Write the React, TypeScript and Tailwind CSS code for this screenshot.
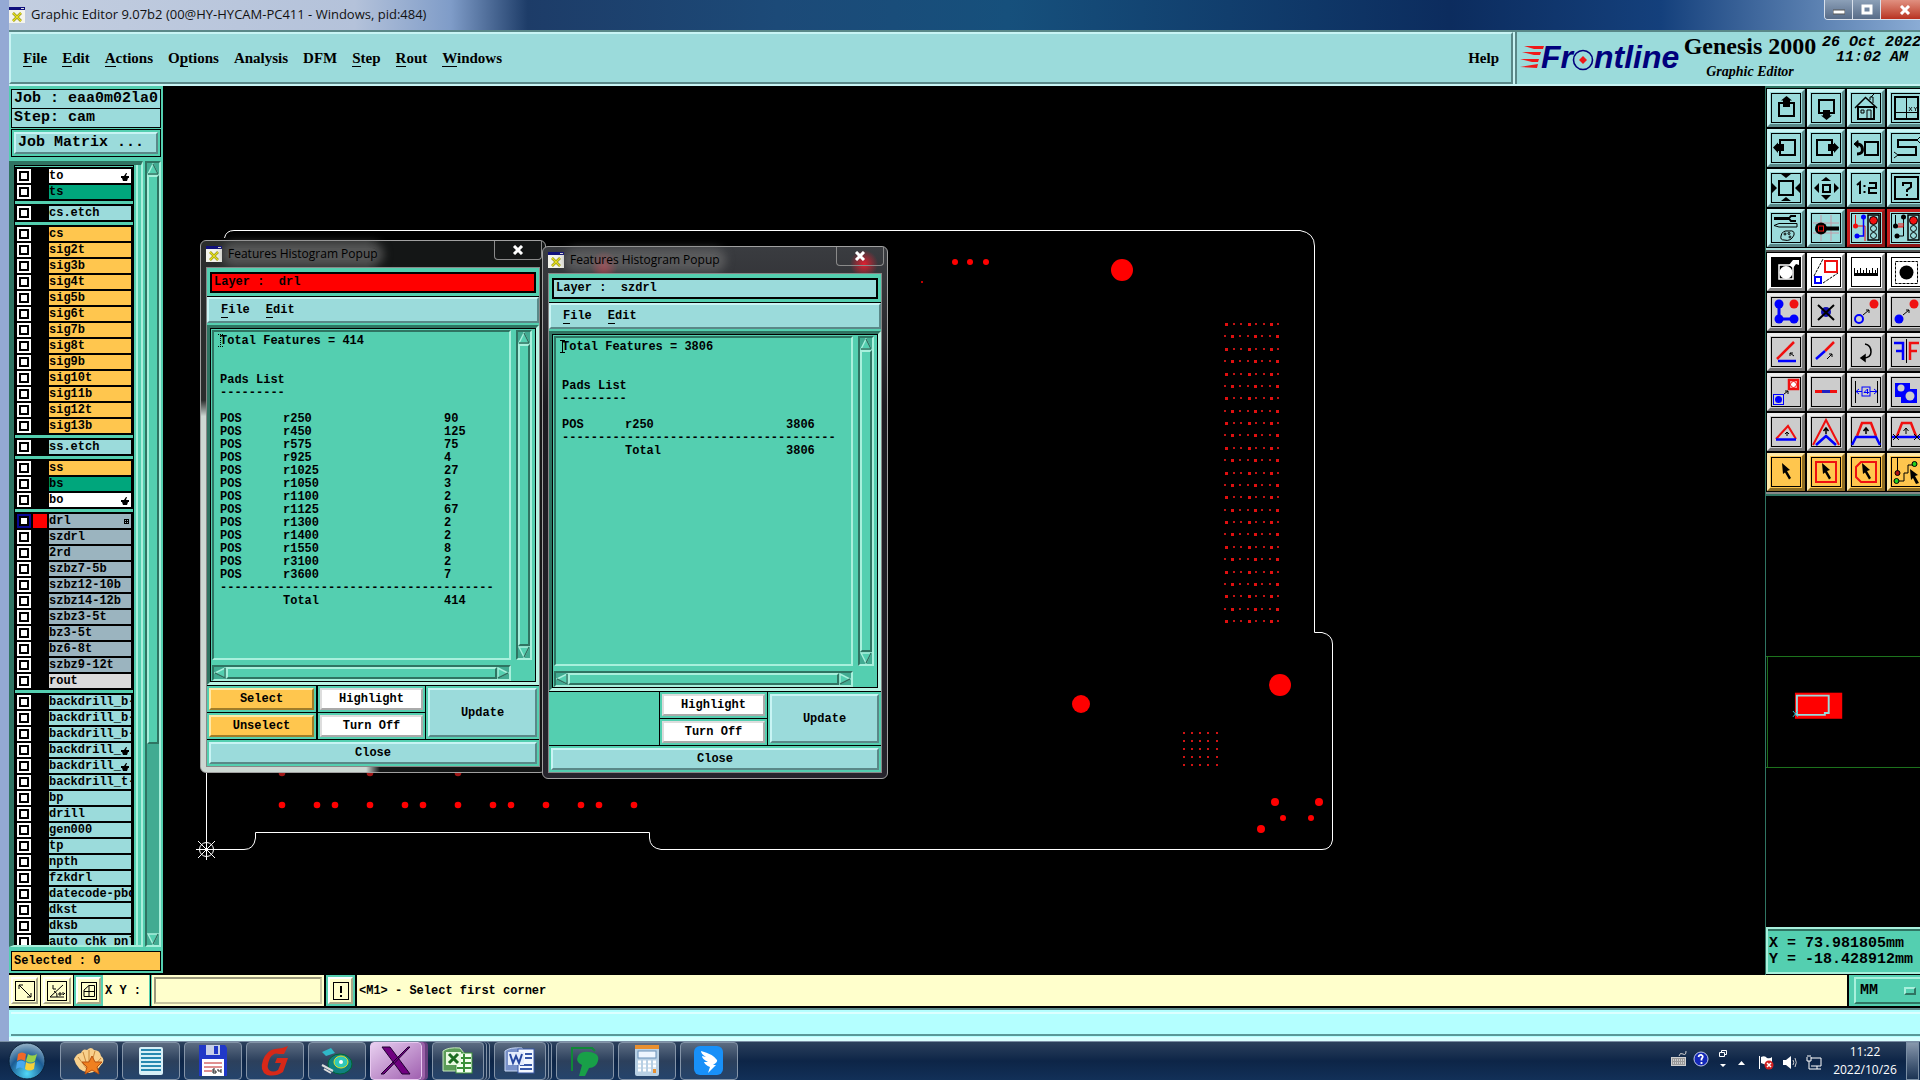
import React from "react";

const bevelCyan =
  "bg-[#9bdbdb] border-t-[#c8f4f4] border-l-[#c8f4f4] border-b-[#5a8888] border-r-[#5a8888]";
const bevelTeal =
  "bg-[#54cfb0] border-t-[#a8f0dc] border-l-[#a8f0dc] border-b-[#2f7462] border-r-[#2f7462]";
const sunkTeal =
  "bg-[#54cfb0] border-t-[#2f7462] border-l-[#2f7462] border-b-[#a8f0dc] border-r-[#a8f0dc]";
const mono = "font-['Liberation_Mono',monospace] font-bold";
const sans = "font-['Open_Sans',sans-serif]";

type Tone = "orange" | "white" | "green" | "cyan" | "slate" | "light";

interface Layer {
  name: string;
  tone: Tone;
  mark?: "hand" | "grid";
  active?: boolean;
}

const toneClass: Record<Tone, string> = {
  orange: "bg-[#ffc64e]",
  white: "bg-white",
  green: "bg-[#00a67c]",
  cyan: "bg-[#9bdbdb]",
  slate: "bg-[#9bb4bf]",
  light: "bg-[#dadada]",
};

const make = (tone: Tone, names: string[]): Layer[] => names.map((name) => ({ name, tone }));

const layerGroups: Layer[][] = [
  [{ name: "to", tone: "white", mark: "hand" }, { name: "ts", tone: "green" }],
  make("cyan", ["cs.etch"]),
  make("orange", [
    "cs", "sig2t", "sig3b", "sig4t", "sig5b", "sig6t", "sig7b",
    "sig8t", "sig9b", "sig10t", "sig11b", "sig12t", "sig13b",
  ]),
  make("cyan", ["ss.etch"]),
  [
    { name: "ss", tone: "orange" },
    { name: "bs", tone: "green" },
    { name: "bo", tone: "white", mark: "hand" },
  ],
  [
    { name: "drl", tone: "slate", mark: "grid", active: true },
    ...make("slate", [
      "szdrl", "2rd", "szbz7-5b", "szbz12-10b", "szbz14-12b", "szbz3-5t", "bz3-5t", "bz6-8t", "szbz9-12t",
    ]),
    { name: "rout", tone: "light" },
  ],
  [
    ...make("cyan", ["backdrill_b-", "backdrill_b-", "backdrill_b-"]),
    { name: "backdrill_", tone: "cyan", mark: "hand" },
    { name: "backdrill_", tone: "cyan", mark: "hand" },
    ...make("cyan", [
      "backdrill_t-", "bp", "drill", "gen000", "tp", "npth", "fzkdrl", "datecode-pbd", "dkst", "dksb", "auto_chk_pnl",
    ]),
  ],
];

const menus: [string, number][] = [
  ["File", 0], ["Edit", 0], ["Actions", 0], ["Options", 1], ["Analysis", -1],
  ["DFM", -1], ["Step", 0], ["Rout", 0], ["Windows", 0],
];

function Mnemonic({ text, at = 0 }: { text: string; at?: number }) {
  if (at < 0) return <>{text}</>;
  return (
    <>
      {text.slice(0, at)}
      <span className="border-b border-black">{text[at]}</span>
      {text.slice(at + 1)}
    </>
  );
}

function AppIcon() {
  return (
    <svg width="16" height="16" viewBox="0 0 16 16" className="shrink-0">
      <rect width="16" height="16" fill="#f4f4ec" />
      <rect width="16" height="3" fill="#10107c" />
      <rect x="12" y="1" width="3" height="1" fill="#ddd" />
      <path d="M4 6l8 8M12 6l-8 8" stroke="#8a8a10" strokeWidth="2.500" />
      <path d="M4 6l8 8M12 6l-8 8" stroke="#e8e020" strokeWidth="1.400" />
    </svg>
  );
}

function Arrow({ dir }: { dir: "up" | "down" | "left" | "right" }) {
  const pts = {
    up: "6,1 11,11 1,11",
    down: "1,1 11,1 6,11",
    left: "1,6 11,1 11,11",
    right: "1,1 11,6 1,11",
  }[dir];
  const shade = {
    up: "M11 11L6 1M1 11H11",
    down: "M11 1L6 11",
    left: "M1 6L11 11V1",
    right: "M1 11L11 6",
  }[dir];
  return (
    <svg width="12" height="12" viewBox="0 0 12 12" className="shrink-0">
      <polygon points={pts} fill="#54cfb0" stroke="#a8f0dc" strokeWidth="1.400" />
      <path d={shade} stroke="#2f7462" strokeWidth="1.400" fill="none" />
    </svg>
  );
}

function VScroll({ thumb }: { thumb: string }) {
  return (
    <div className="flex w-4 shrink-0 flex-col border-2 border-t-[#2f7462] border-l-[#2f7462] border-r-[#a8f0dc] border-b-[#a8f0dc] bg-[#42ab92]">
      <Arrow dir="up" />
      <div className="min-h-0 flex-1">
        <div className={`border-2 ${thumb} ${bevelTeal}`} />
      </div>
      <Arrow dir="down" />
    </div>
  );
}

function HScroll() {
  return (
    <div className="flex h-4 border-2 border-t-[#2f7462] border-l-[#2f7462] border-r-[#a8f0dc] border-b-[#a8f0dc] bg-[#42ab92]">
      <Arrow dir="left" />
      <div className={`flex-1 border-2 ${bevelTeal}`} />
      <Arrow dir="right" />
    </div>
  );
}

function LayerRow({ layer }: { layer: Layer }) {
  return (
    <label className="flex h-4 items-center gap-[2px]">
      <input
        type="checkbox"
        defaultChecked={layer.active}
        className="size-[14px] shrink-0 appearance-none border-2 border-white bg-white shadow-[inset_0_0_0_2px_#000] checked:border-[#0a0a96]"
      />
      <span className={`size-[14px] shrink-0 ${layer.active ? "bg-[#ff0000]" : ""}`} />
      <span className={`relative h-[14px] min-w-0 flex-1 overflow-hidden text-xs leading-[14px] whitespace-nowrap ${toneClass[layer.tone]}`}>
        {layer.name}
        {layer.mark === "hand" && (
          <svg width="8" height="8" viewBox="0 0 8 8" className="absolute top-1 right-[2px]">
            <path d="M0 3L3 3L5 0L6 0L5 3H8V5H7L6 8H2L1 5H0Z" fill="#000" />
          </svg>
        )}
        {layer.mark === "grid" && (
          <svg width="5" height="5" viewBox="0 0 5 5" className="absolute top-[5px] right-[2px]">
            <path d="M0 .5H5M0 2.500H5M0 4.500H5M.5 0V5M2.500 0V5M4.500 0V5" stroke="#000" strokeWidth="1" />
          </svg>
        )}
      </span>
    </label>
  );
}

function Sidebar() {
  return (
    <aside className={`flex w-[154px] shrink-0 flex-col bg-black pb-[2px] ${mono}`}>
      <div className="flex min-h-0 flex-1 flex-col bg-[#54cfb0] px-[2px] pt-[3px] pb-[2px]">
        <div className="h-[20px] border border-black bg-[#9bdbdb] px-[2px] text-[15px] leading-[18px] whitespace-nowrap">Job : eaa0m02la0</div>
        <div className="-mt-px h-[20px] border border-black bg-[#9bdbdb] px-[2px] text-[15px] leading-[18px] whitespace-nowrap">Step: cam</div>
        <div className="mt-px border border-black p-[2px]">
          <button className={`block h-[22px] w-full border-2 px-[2px] text-left text-[15px] leading-[18px] whitespace-nowrap ${bevelCyan}`}>
            Job Matrix ...
          </button>
        </div>
        <div className="mt-1 -ml-[2px] flex min-h-0 flex-1">
          <div className="flex min-w-0 flex-1 flex-col border-t-4 border-l-[5px] border-r-2 border-b-2 border-t-[#2f7462] border-l-[#2f7462] border-r-[#a8f0dc] border-b-[#a8f0dc] pr-[3px]">
            <div className="flex min-h-0 flex-1 flex-col border-r-2 border-r-[#a8f0dc] pr-[2px]">
              <div className="flex h-0 flex-1 flex-col gap-[3px] overflow-hidden border-x border-t border-black bg-[#54cfb0] pt-px">
                {layerGroups.map((group, i) => (
                  <div key={i} className="shrink-0 bg-black px-[2px] py-px">
                    {group.map((layer, j) => (
                      <LayerRow key={j} layer={layer} />
                    ))}
                  </div>
                ))}
              </div>
            </div>
          </div>
          <div className="ml-[2px] flex">
            <VScroll thumb="h-3/4" />
          </div>
        </div>
        <div className="mt-1 h-[20px] border border-black bg-[#ffc64e] px-[2px] text-xs leading-[18px]">Selected : 0</div>
      </div>
    </aside>
  );
}

const evenCols = [1226, 1234, 1241, 1249, 1256, 1264, 1271, 1278];
const oddCols = [1225, 1232, 1240, 1248, 1255, 1262, 1270, 1277];
const padRow = [282, 317, 335, 370, 405, 423, 458, 493, 511, 546, 581, 599, 634];
const holes: [number, number, number][] = [
  [955, 262, 3], [970, 262, 3], [986, 262, 3], [922, 282, 1],
  [1122, 270, 11], [1280, 685, 11], [1081, 704, 9],
  [1275, 802, 4], [1319, 802, 4], [1283, 818, 3], [1311, 818, 3], [1261, 829, 4],
];

function Board() {
  const grid: React.ReactNode[] = [];
  for (let r = 0; r < 25; r++) {
    const odd = r % 2;
    (odd ? oddCols : evenCols).forEach((x, c) => {
      const big = c % 3 === (odd ? 1 : 0);
      const s = big ? 3 : 2;
      grid.push(
        <rect key={`${r}-${c}`} x={x - 1} y={Math.round(323 + r * 12.38)} width={s} height={s} fill={big ? "#e01010" : "#c01414"} />
      );
    });
  }
  return (
    <svg width="1602" height="889" viewBox="163 86 1602 889" className="absolute top-0 left-0">
      <path
        d="M206.500 849V260M224.500 238Q226 230.500 234 230.500H1300Q1314.500 233 1314.500 246V632.500H1322Q1332.500 635 1332.500 644V840Q1331 849.500 1322 849.500H661Q650 848 649.500 838V832.500H255.500V838Q254 849.500 244 849.500H206"
        fill="none"
        stroke="#fff"
      />
      {grid}
      {[732, 740, 748, 756, 764].map((y) =>
        [1183, 1191, 1199, 1207, 1216].map((x) => <rect key={`${x}${y}`} x={x} y={y} width="2" height="2" fill="#d01414" />)
      )}
      {padRow.map((x) => (
        <circle key={x} cx={x} cy="805" r="3.300" fill="#f00" />
      ))}
      {[282, 370, 458].map((x) => (
        <circle key={x} cx={x} cy="773" r="3.300" fill="#a01818" />
      ))}
      {holes.map(([x, y, r]) => (
        <circle key={`${x},${y}`} cx={x} cy={y} r={r} fill="#f00" />
      ))}
      <g stroke="#fff" fill="none">
        <circle cx="206.500" cy="849.500" r="7" />
        <path d="M196 849.500H217M206.500 839V860M198 841L215 858M215 841L198 858" />
      </g>
    </svg>
  );
}

const K = "#000";
const R = "#f01010";
const B = "#0000ff";

const navIcons: React.ReactNode[] = [
  <g key="up"><rect x="8" y="10" width="15" height="13" fill="none" stroke={K} strokeWidth="2" /><path d="M15.500 3L21 7.500H19V14H12V7.500H10Z" /></g>,
  <g key="down"><rect x="8" y="7" width="15" height="13" fill="none" stroke={K} strokeWidth="2" /><path d="M15.500 27L21 22.500H19V17H12V22.500H10Z" /></g>,
  <g key="home" fill="none" stroke={K}>
    <path d="M4 15L14.500 4.500L26 15" strokeWidth="1.500" /><path d="M7 14V26H23V14Z" strokeWidth="2" /><path d="M19 7V4H22V10M20 4L23 1M10 17H13V20H10ZM16 26V17H20V26" />
  </g>,
  <g key="xy" fill="none" stroke={K}>
    <rect x="4" y="4" width="23" height="22" strokeWidth="2" /><path d="M15.500 4V26M4 19.500H27" /><path d="M18 14L21 18M21 14L18 18M23 14L24.500 16L26 14M24.500 16V18" strokeWidth=".8" />
  </g>,
  <g key="left"><rect x="9" y="7" width="15" height="15" fill="none" stroke={K} strokeWidth="2" /><path d="M2 14.500L7 9.500V11H13V18H7V20Z" /></g>,
  <g key="right"><rect x="6" y="7" width="15" height="15" fill="none" stroke={K} strokeWidth="2" /><path d="M28 14.500L23 9.500V11H17V18H23V20Z" /></g>,
  <g key="back" fill="none" stroke={K}><rect x="14" y="9" width="13" height="13" strokeWidth="2" /><path d="M6 21Q13 21 11 14Q10 11 6 11" strokeWidth="3" /><path d="M3 11L7 7.500V14.500Z" fill={K} /></g>,
  <g key="serp" fill="none" stroke={K}><path d="M26 7H7V14H25V22H7" strokeWidth="2" /><path d="M26 7L29 4M26 7L29 10M7 22L3 19M7 22L3 25" /></g>,
  <g key="in"><rect x="8" y="8" width="14" height="14" fill="none" stroke={K} strokeWidth="2" /><path d="M10 1H20L15 5ZM10 28H20L15 24ZM1 10V20L6 15ZM29 10V20L24 15Z" /></g>,
  <g key="out"><rect x="12" y="12" width="7" height="7" fill="none" stroke={K} strokeWidth="2" /><path d="M10 8H20L15 4ZM10 22H20L15 27ZM8 10V20L3 15ZM23 10V20L28 15Z" /></g>,
  <path key="half" d="M6 12L9 9.500V21M13.500 12V14M13.500 18V20M18 10H25V15H18V20H26" fill="none" stroke={K} strokeWidth="2" />,
  <g key="ask" fill="none" stroke={K} strokeWidth="2"><rect x="4" y="4" width="23" height="22" /><path d="M12 13V10H20V14L16 17V19M16 21V23" /></g>,
  <g key="tools" fill="none" stroke={K}>
    <path d="M3 5.500H18" strokeWidth="3" /><path d="M25 3H20L18 5.500L20 8H25" strokeWidth="2" /><path d="M3 12.500L8 10.500H26V14H8Z" /><path d="M10 23Q11 17 18 18Q24 17 23 22Q20 29 13 27Q9 27 10 23Z" /><circle cx="14" cy="21" r="1" /><circle cx="18" cy="20.500" r="1" /><circle cx="19" cy="24" r="1" />
  </g>,
  <g key="key"><path d="M10 2V28M20 2V28M2 10H28M2 20H28" stroke="#c49aa8" /><circle cx="10" cy="15.500" r="6" /><path d="M14 15.500H28" stroke={K} strokeWidth="4" /><rect x="7.500" y="13" width="5" height="5" fill="none" stroke={R} /></g>,
  <g key="lights">
    <path d="M4.500 2V13H14V28" stroke={R} fill="none" /><path d="M12.500 4V23H6" stroke={B} strokeWidth="1.500" fill="none" /><circle cx="4.500" cy="13" r="2.500" fill={R} /><circle cx="12.500" cy="4" r="2.500" fill={B} /><circle cx="6" cy="23" r="2.500" fill={B} />
    <rect x="17" y="2" width="11" height="25" fill="none" stroke={K} strokeWidth="1.500" /><circle cx="22.500" cy="7.500" r="4" fill={R} stroke={K} /><circle cx="22.500" cy="15.500" r="3" fill="none" stroke={K} /><circle cx="22.500" cy="22.500" r="3" fill="none" stroke={K} />
  </g>,
  <g key="lights2">
    <path d="M4.500 2V13M12.500 4V23H6" stroke={K} fill="none" /><path d="M6 14H12M8 10V14M10 10V14M12 10V14" stroke={R} /><circle cx="4.500" cy="13" r="2.500" /><circle cx="12.500" cy="4" r="2.500" /><circle cx="6" cy="23" r="2.500" />
    <rect x="17" y="2" width="11" height="25" fill="none" stroke={K} strokeWidth="1.500" /><circle cx="22.500" cy="7.500" r="4" fill={R} stroke={K} /><circle cx="22.500" cy="15.500" r="3" fill="none" stroke={K} /><circle cx="22.500" cy="22.500" r="3" fill="none" stroke={K} />
  </g>,
];

const viewIcons: React.ReactNode[] = [
  <g key="mask"><rect x="1" y="1" width="28" height="28" /><rect x="8" y="8" width="14" height="14" fill="none" stroke="#fff" strokeWidth="1.500" /><circle cx="15" cy="15.500" r="6.500" fill="#fff" /><path d="M18 8L22 3H28V8L25 7L22 11Z" fill="#fff" /></g>,
  <g key="copy" fill="none"><rect x="14" y="4" width="12" height="11" stroke={R} strokeWidth="2" /><rect x="4" y="20" width="6" height="6" stroke={B} strokeWidth="2" /><path d="M3 19L12 2M12 26L27 16" stroke={K} strokeDasharray="3 1" /></g>,
  <path key="ruler" d="M3 11V19H27V11H26V16H25V13H24V16H22V11H21V16H19V13H18V16H16V11H15V16H13V13H12V16H10V11H9V16H7V13H6V16H4V11Z" />,
  <g key="dot"><rect x="4.500" y="4.500" width="22" height="22" fill="none" stroke={K} strokeDasharray="3 1" /><circle cx="15.500" cy="15.500" r="7" /></g>,
];

const editIcons: React.ReactNode[] = [
  <g key="a"><path d="M8 7V22H23" fill="none" stroke={B} strokeWidth="3" /><circle cx="8" cy="7" r="4.500" fill={B} /><circle cx="8" cy="22" r="4.500" fill={B} /><circle cx="23" cy="22" r="4.500" fill={B} /><circle cx="23" cy="7" r="4.500" fill={R} /></g>,
  <g key="b"><circle cx="15" cy="15" r="5" fill="#1010b0" /><path d="M7 8L23 23M23 8L7 23" stroke={K} strokeWidth="2" /></g>,
  <g key="c"><circle cx="23" cy="7" r="4.500" fill={R} /><circle cx="8" cy="22" r="4" fill="none" stroke={B} strokeWidth="2" /><path d="M12 18L18 13M15 13H18V16" fill="none" stroke={K} /></g>,
  <g key="d"><circle cx="23" cy="7" r="4.500" fill={R} /><circle cx="8" cy="22" r="4.500" fill={B} /><path d="M12 18L18 13M15 13H18V16" fill="none" stroke={K} /></g>,
  <g key="e" fill="none"><path d="M6 22L23 5" stroke={R} strokeWidth="2.500" /><path d="M7 24H25" stroke={B} strokeWidth="2.500" /><path d="M23 19L19 16M19 19V16H22" stroke={K} /></g>,
  <g key="f" fill="none"><path d="M14 14L23 5" stroke={R} strokeWidth="2.500" /><path d="M5 22L14 14" stroke={B} strokeWidth="2.500" /><path d="M16 22L21 17M18 17H21V20" stroke={K} /></g>,
  <g key="g" fill="none" stroke={K} strokeWidth="1.500"><path d="M14 7Q20 8 20 15Q20 21 12 21" /><path d="M14 18L10 21L14 24Z" fill={K} /></g>,
  <g key="h" fill="none" strokeWidth="2.500"><path d="M3 6H12V23M12 14H5" stroke={B} /><path d="M28 6H19V23M19 14H26" stroke={R} /><path d="M15.500 2V26" stroke={K} strokeWidth="1" /></g>,
  <g key="i" fill="none"><rect x="18" y="3" width="9" height="9" fill="#fff" stroke={R} strokeWidth="2.500" /><circle cx="22.500" cy="7.500" r="3" stroke={R} strokeWidth="1" /><rect x="2.500" y="17.500" width="10" height="10" stroke={B} /><circle cx="7.500" cy="22.500" r="3.500" fill={B} /><path d="M13 17L17 14M14 14H17V17" stroke={K} /></g>,
  <g key="j" strokeWidth="3"><path d="M4 14.500H26" stroke={R} /><path d="M11 14.500H19" stroke="#2020c0" /></g>,
  <g key="k" fill="none" stroke={B}><path d="M4.500 4V26M26.500 4V26" stroke={K} /><rect x="11" y="10" width="8" height="9" /><path d="M16.500 17V12L13 15.500H18M5 14.500H11M19 14.500H26M8 12L5 14.500L8 17M23 12L26 14.500L23 17" /></g>,
  <g key="l"><path d="M4 6H19V12H26V26H10V20H4Z" fill={B} /><circle cx="10" cy="11" r="3.500" fill="#ccc" /><circle cx="19" cy="19" r="4.500" fill="#ccc" /></g>,
  <g key="m" fill="none"><path d="M5 22L17 9L25 22" stroke={R} strokeWidth="2" /><path d="M5 22.500H25" stroke={B} strokeWidth="2.500" /><path d="M16 19V15M14 17L16 15L18 17" stroke={K} /></g>,
  <g key="n" fill="none"><path d="M2 28L15 3L28 28" stroke={R} strokeWidth="2" /><path d="M5 28L15 19L25 28" stroke={B} strokeWidth="2.500" /><path d="M15 17V11M12.500 14L15 11L17.500 14" stroke={K} strokeWidth="1.500" /></g>,
  <g key="o" fill="none"><path d="M6 19L11 6H20L25 19" stroke={R} strokeWidth="2.500" /><path d="M1 28L5 20H25L29 28" stroke={B} strokeWidth="2.500" /><path d="M15 17V11M12.500 14L15 11L17.500 14" stroke={K} strokeWidth="1.500" /></g>,
  <g key="p" fill="none"><path d="M6 19L11 6H20L25 19" stroke={R} strokeWidth="2.500" /><path d="M1 20H29" stroke={B} strokeWidth="2.500" /><path d="M15 17V11M12.500 14L15 11L17.500 14M2 17L8 23M8 17L2 23M23 17L29 23M29 17L23 23" stroke={K} /></g>,
];

const cursor = "M11 6L19 13L16 14L20 21L18 22.500L14 15.500L12 17Z";
const selectIcons: React.ReactNode[] = [
  <path key="s" d={cursor} />,
  <g key="r"><rect x="5" y="5" width="20" height="20" fill="none" stroke={R} strokeWidth="2" /><path d={cursor} /></g>,
  <g key="p"><path d="M10 5H25V25H10L5 20V10Z" fill="none" stroke={R} strokeWidth="2" /><path d={cursor} /></g>,
  <g key="n"><path d="M6.500 1V14M7 24H13V16H17V8H22" fill="none" stroke={K} /><circle cx="6.500" cy="16" r="2.500" fill="#b01010" stroke={K} /><circle cx="5.500" cy="24" r="2.500" fill="#20d020" stroke={K} /><circle cx="23.500" cy="7" r="2.500" fill="#20d020" stroke={K} /><path d="M19 12L27 18L24 19L28 26L25 27L22 21L20 23Z" /></g>,
];

const btnTone = {
  cyan: bevelCyan,
  red: "bg-[#9bdbdb] border-t-[#c82020] border-l-[#c82020] border-b-[#8e1818] border-r-[#8e1818]",
  white: "bg-white border-t-white border-l-white border-b-[#8a8a8a] border-r-[#8a8a8a]",
  gray: "bg-[#cccccc] border-t-[#ececec] border-l-[#ececec] border-b-[#777] border-r-[#777]",
  orange: "bg-[#ffc64e] border-t-[#ffe9a8] border-l-[#ffe9a8] border-b-[#8c6c24] border-r-[#8c6c24]",
};

function ToolButton({ icon, tone, label }: { icon: React.ReactNode; tone: keyof typeof btnTone; label: string }) {
  return (
    <button aria-label={label} className={`flex size-[38px] items-center justify-center border-[3px] ${btnTone[tone]}`}>
      <svg width="30" height="30" viewBox="0 0 30 30">
        <rect x=".5" y=".5" width="29" height="29" fill="none" stroke="#000" />
        {icon}
      </svg>
    </button>
  );
}

function ToolPanel() {
  return (
    <aside className="flex w-[165px] shrink-0 flex-col border-l border-[#2f7462] bg-black pb-px">
      <div className="grid grid-cols-[repeat(4,38px)] gap-[2px] border-t-2 border-[#2f7462] pt-px pb-px pl-px">
        {navIcons.map((icon, i) => (
          <ToolButton key={i} icon={icon} tone={i > 13 ? "red" : "cyan"} label={`view ${i + 1}`} />
        ))}
      </div>
      <div className="h-[2px] bg-[#a8e0dc]" />
      <div className="grid grid-cols-[repeat(4,38px)] gap-[2px] border-t-2 border-[#555] pt-px pb-px pl-px">
        {viewIcons.map((icon, i) => (
          <ToolButton key={i} icon={icon} tone="white" label={`display ${i + 1}`} />
        ))}
        {editIcons.map((icon, i) => (
          <ToolButton key={i} icon={icon} tone="gray" label={`edit ${i + 1}`} />
        ))}
        {selectIcons.map((icon, i) => (
          <ToolButton key={i} icon={icon} tone="orange" label={`select ${i + 1}`} />
        ))}
      </div>
      <div className="border-t-2 border-b-2 border-t-[#888] border-b-[#2f7462]" />
      <div className="flex flex-1 items-center">
        <svg width="170" height="116" viewBox="0 0 170 116">
          <path d="M0 .5H170M0 115.500H170M1.500 0V116" stroke="#1f7a1f" fill="none" />
          <rect x="30" y="38" width="49" height="27" fill="#f00" />
          <path d="M32 41H65V59H61V61H32Z" fill="none" stroke="#9bdbdb" strokeWidth="2" />
          <path d="M28 57L33 63M33 57L28 63" stroke="#2fd0e0" />
        </svg>
      </div>
      <div className={`border-2 border-[#a8f0dc] bg-[#54cfb0] pt-[7px] pb-1 pl-px text-[15px] leading-4 whitespace-pre shadow-[inset_0_2px_0_#2f7462] ${mono}`}>
        <div>X = 73.981805mm</div>
        <div>Y = -18.428912mm</div>
      </div>
    </aside>
  );
}

function Header() {
  return (
    <header className="flex h-14 shrink-0 border-t-2 border-[#5a8888] bg-[#c8f4f4] pb-[2px] font-['Liberation_Serif',serif] font-bold">
      <nav className={`flex flex-1 items-center gap-[15px] border-2 px-3 pb-px text-[15px] leading-4 ${bevelCyan}`}>
        {menus.map(([text, at]) => (
          <button key={text}>
            <Mnemonic text={text} at={at} />
          </button>
        ))}
        <button className="ml-auto">Help</button>
      </nav>
      <div className="ml-[2px] flex w-[415px] border-l-2 border-[#5a8888] bg-[#9bdbdb] pl-[3px]">
        <svg width="162" height="52" viewBox="0 0 162 52" className="shrink-0">
          <g fill="#f01818">
            <path d="M4 14L24 14L23 17H14ZM2 20L21 20L20 23H14ZM0 27L19 27L18 30H12ZM0 35L18 32L17 36Z" />
          </g>
          <g fill="#00007c" className="font-['Liberation_Sans',sans-serif] text-[32px] italic">
            <text x="21" y="36">Fr</text>
            <text x="74" y="36">ntline</text>
          </g>
          <circle cx="63" cy="28" r="9.500" fill="none" stroke="#00007c" strokeWidth="1.600" />
          <path d="M63 24L67 28L63 32L59 28Z" fill="#f01818" />
        </svg>
        <div className="flex w-[136px] shrink-0 flex-col items-center whitespace-nowrap">
          <span className="text-2xl leading-7">Genesis 2000</span>
          <span className="text-sm leading-6 italic">Graphic Editor</span>
        </div>
        <div className="pt-[3px] pl-1 text-[15px] leading-[15px] whitespace-nowrap italic font-['Liberation_Mono',monospace]">
          <div>26 Oct 2022</div>
          <div className="pl-[14px]">11:02 AM</div>
        </div>
      </div>
    </header>
  );
}

const creamBtn = "border-2 border-t-white border-l-white border-b-[#aaa88a] border-r-[#aaa88a] bg-[#ffffcc]";

function PromptBar() {
  return (
    <div className={`flex h-[33px] shrink-0 border-b-2 border-black bg-[#ffffcc] text-xs ${mono}`}>
      <button aria-label="corner mode" className={`m-[2px] flex w-[27px] items-center justify-center ${creamBtn}`}>
        <svg width="20" height="20" viewBox="0 0 20 20" fill="none" stroke="#000" className="shrink-0">
          <rect x=".5" y=".5" width="19" height="19" /><path d="M4 4L16 16M4 8V4H8M12 16H16V12" />
        </svg>
      </button>
      <span className="w-px bg-black" />
      <button aria-label="angle mode" className={`m-[2px] flex w-[28px] items-center justify-center ${creamBtn}`}>
        <svg width="20" height="20" viewBox="0 0 20 20" fill="none" stroke="#000" className="shrink-0">
          <rect x=".5" y=".5" width="19" height="19" /><path d="M3 16L16 4M3 16H17M6 4V8H9M7 10Q11 12 10 16M12 12H14V14H12ZM16 11V14L18 12" />
        </svg>
      </button>
      <span className="flex border-l border-black bg-[#54cfb0] p-[2px]">
        <button aria-label="grid snap" className={`flex w-[25px] items-center justify-center ${creamBtn}`}>
          <svg width="16" height="18" viewBox="0 0 16 18" fill="none" stroke="#000">
            <rect x=".5" y=".5" width="15" height="17" /><path d="M3 14.500V8L8 3.500H13.500V14.500ZM8 3.500V14.500M3 9.500H13.500" />
          </svg>
        </button>
      </span>
      <label htmlFor="xy" className="flex w-[46px] items-center pl-[2px] whitespace-pre">X Y :</label>
      <span className="w-[3px] border-x border-x-[#54cfb0] bg-black" />
      <input
        id="xy"
        className="m-[2px] w-[168px] border-2 border-t-[#99977a] border-l-[#99977a] border-b-[#c8c6a0] border-r-[#c8c6a0] bg-[#ffffcc] px-1"
      />
      <span className="flex border-x-2 border-black bg-[#54cfb0] p-[2px]">
        <button aria-label="alert" className={`flex w-[25px] items-center justify-center ${creamBtn}`}>
          <svg width="16" height="18" viewBox="0 0 16 18">
            <rect x=".5" y=".5" width="15" height="17" fill="none" stroke="#000" /><path d="M8 4V11M8 13V15" stroke="#000" strokeWidth="2" />
          </svg>
        </button>
      </span>
      <p className="flex flex-1 items-center pl-[2px]">&lt;M1&gt; - Select first corner</p>
      <div className="flex w-[83px] border-l-2 border-black bg-[#54cfb0] py-[2px] pl-[5px]">
        <div className={`flex flex-1 items-center border-2 pl-1 ${bevelTeal}`}>
          <select aria-label="units" className="w-11 shrink-0 appearance-none bg-transparent text-[15px]">
            <option>MM</option>
          </select>
          <span className={`h-2 w-3 shrink-0 border-2 ${bevelTeal}`} />
        </div>
      </div>
    </div>
  );
}

interface PopupProps {
  layer: string;
  total: number;
  rows: [string, number][];
  layerClass: string;
  frameClass: string;
  selectable?: boolean;
}

const whiteBtn = "border-2 border-t-[#ddd] border-l-[#ddd] border-b-[#aaa] border-r-[#aaa] bg-white";
const orangeBtn = "border-2 border-t-[#ffe9a8] border-l-[#ffe9a8] border-b-[#a07c28] border-r-[#a07c28] bg-[#ffc64e]";

function HistogramPopup({ layer, total, rows, layerClass, frameClass, selectable }: PopupProps) {
  return (
    <section className={`absolute flex w-[346px] flex-col rounded-md border border-[#a0a0a0] px-[5px] pb-[5px] ${frameClass}`}>
      <div className={`flex h-[26px] items-center gap-[6px] ${sans} text-xs`}>
        <AppIcon />
        <h2 className="rounded-full bg-[#707070]/60 leading-3 text-black shadow-[0_0_8px_6px_#70707099]">Features Histogram Popup</h2>
        <button aria-label="close popup" className="-mr-[2px] mb-auto ml-auto flex h-[19px] w-12 items-center justify-center rounded-b border border-t-0 border-[#8a8a8a]">
          <svg width="12" height="10" viewBox="0 0 12 10">
            <path d="M2 1L10 9M10 1L2 9" stroke="#fff" strokeWidth="3" />
          </svg>
        </button>
      </div>
      <div className={`border border-[#888] bg-[#54cfb0] text-xs ${mono}`}>
        <div className="border-b border-black px-[3px] pt-1 pb-[3px]">
          <div className={`h-[21px] border-2 border-black px-[2px] leading-[17px] whitespace-pre ${layerClass}`}>{`Layer :  ${layer}`}</div>
        </div>
        <nav className={`flex h-[26px] items-center gap-4 border-2 px-3 leading-[14px] ${bevelCyan}`}>
          <button><Mnemonic text="File" /></button>
          <button><Mnemonic text="Edit" /></button>
        </nav>
        <div className="mt-[2px] border-[3px] border-t-[#2f7462] border-l-[#2f7462] border-r-[#b8f4e4] border-b-[#b8f4e4]">
          <div className="grid grid-cols-[minmax(0,1fr)_auto] gap-x-[5px] gap-y-[5px] border border-black pt-px pr-[3px] pl-px">
            <div className={`relative h-[330px] border-2 px-[6px] pt-[3px] leading-[13px] ${sunkTeal}`}>
              <svg width="5" height="13" viewBox="0 0 5 13" className="absolute top-[2px] left-1">
                <path d="M0 .5H5M2.500 0V13M0 12.500H5" stroke="#000" strokeDasharray={selectable ? "1 1" : undefined} />
              </svg>
              <p>Total Features = {total}</p>
              <p className="pt-[26px]">Pads List</p>
              <p>---------</p>
              <table className="mt-[13px] w-full table-fixed text-left">
                <tbody>
                  {rows.map(([size, count]) => (
                    <tr key={size}>
                      <td className="w-[63px] p-0">POS</td>
                      <td className="w-[161px] p-0">{size}</td>
                      <td className="p-0">{count}</td>
                    </tr>
                  ))}
                  <tr>
                    <td colSpan={3} className="p-0 whitespace-nowrap">{"-".repeat(38)}</td>
                  </tr>
                  <tr>
                    <td className="p-0" />
                    <td className="p-0">Total</td>
                    <td className="p-0">{total}</td>
                  </tr>
                </tbody>
              </table>
            </div>
            <VScroll thumb="h-full" />
            <HScroll />
          </div>
        </div>
        <div className="grid grid-cols-[110px_109px_1fr] border-t border-black">
          {selectable ? (
            <div className="flex flex-col">
              <div className="border-r border-b border-black p-[2px]">
                <button className={`h-[22px] w-full ${orangeBtn}`}>Select</button>
              </div>
              <div className="border-r border-black p-[2px]">
                <button className={`h-[22px] w-full ${orangeBtn}`}>Unselect</button>
              </div>
            </div>
          ) : (
            <div />
          )}
          <div className="flex flex-col">
            <div className="border-x border-b border-black p-[2px]">
              <button className={`h-[22px] w-full ${whiteBtn}`}>Highlight</button>
            </div>
            <div className="border-x border-black p-[2px]">
              <button className={`h-[22px] w-full ${whiteBtn}`}>Turn Off</button>
            </div>
          </div>
          <div className="flex p-[2px]">
            <button className={`flex-1 border-2 ${bevelCyan}`}>Update</button>
          </div>
        </div>
        <div className="border-t border-black p-[2px]">
          <button className={`h-[22px] w-full border-2 ${bevelCyan}`}>Close</button>
        </div>
      </div>
    </section>
  );
}

const drlRows: [string, number][] = [
  ["r250", 90], ["r450", 125], ["r575", 75], ["r925", 4], ["r1025", 27], ["r1050", 3], ["r1100", 2],
  ["r1125", 67], ["r1300", 2], ["r1400", 2], ["r1550", 8], ["r3100", 2], ["r3600", 7],
];

const taskIcons: { name: string; art: React.ReactNode; stacked?: boolean }[] = [
  { name: "Shell", art: <g><path d="M16 28Q4 26 1 14Q4 8 8 8Q10 3 14 5Q18 1 21 5Q27 5 28 11Q33 15 28 20Q24 27 16 28Z" fill="#f8d08c" /><path d="M16 27L5 12M16 27L10 7M16 27V5M16 27L22 6M16 27L28 13" stroke="#c88a3c" /><path d="M19 11L22 17L29 17L24 22L26 29L19 25L12 29L14 22L9 17L16 17Z" fill="#f08020" stroke="#b85010" /></g> },
  { name: "Notes", art: <g><rect x="4" y="2" width="24" height="28" rx="2" fill="#d8f0f8" /><path d="M6 5H26M6 9H26M6 13H26M6 17H26M6 21H26M6 25H26" stroke="#2888b0" strokeWidth="2" /></g> },
  { name: "Disk", art: <g><path d="M2 0H28L30 3V31H2Z" fill="#2038c8" /><rect x="9" y="0" width="14" height="10" fill="#c8d0e8" /><rect x="17" y="1" width="4" height="8" fill="#2038c8" /><rect x="5" y="14" width="22" height="17" fill="#fff" /><path d="M7 18H25M7 22H25M7 26H15" stroke="#c02020" /><path d="M18 24H16V28H19V26H16M21 24V26H24M24 24V28" stroke="#222" fill="none" /></g> },
  { name: "G", art: <path d="M29 1L25 9H20Q15 7 11 13Q7 22 10 25Q14 28 19 25L22 18H16L18 13H29L24 27Q17 32 8 30Q0 26 4 15Q8 5 16 4Q23 4 29 1Z" fill="#d82818" /> },
  { name: "Disc", art: <g><ellipse cx="19" cy="19" rx="12" ry="10" fill="#108080" stroke="#063" /><ellipse cx="20" cy="17" rx="7" ry="6" fill="#30c8b8" stroke="#e8e020" /><circle cx="20" cy="17" r="2" fill="#fff" /><path d="M1 7L10 3L14 8L5 11Z" fill="#30b8c8" /><path d="M1 20L12 26M3 24L10 28" stroke="#ddd" strokeWidth="2" /></g> },
  { name: "X", stacked: true, art: <g><path d="M2 2H10L30 29H22ZM28 2H30L4 29H1Z" fill="#700080" stroke="#200030" /></g> },
  { name: "Sheet", stacked: true, art: <g><path d="M1 6Q6 2 18 3L22 8V26H1Z" fill="#5c9c58" stroke="#c8e8c0" /><rect x="14" y="8" width="16" height="20" fill="#f4fff0" stroke="#3a9038" /><path d="M15 13H29M15 18H29M15 23H29M22 9V27" stroke="#3a9038" strokeWidth="2" /><rect x="4" y="7" width="15" height="13" fill="#e8f8e0" /><path d="M7 9L16 18M16 9L7 18" stroke="#1c6c20" strokeWidth="3" /></g> },
  { name: "Document", stacked: true, art: <g><path d="M1 6Q6 2 18 3L20 8V26H1Z" fill="#7890c8" stroke="#c8d8f4" /><rect x="14" y="4" width="16" height="24" fill="#f4f8ff" stroke="#3858a8" /><path d="M21 9H28M21 13H28M16 20H28M16 24H28" stroke="#3858a8" strokeWidth="2" /><rect x="4" y="7" width="16" height="13" fill="#e4ecfc" /><path d="M6 9L9 18L12 11L15 18L18 9" stroke="#2848a0" strokeWidth="2" fill="none" /></g> },
  { name: "P", art: <g><path d="M3 26V3H23L26 6" stroke="#108838" fill="none" strokeWidth="2" /><path d="M10 31L13 20Q6 17 9 11Q12 6 20 7Q31 8 29 16Q27 23 20 23L16 31Z" fill="#18a048" /></g> },
  { name: "Calculator", art: <g><rect x="4" y="0" width="24" height="31" rx="2" fill="#b8d0e4" /><rect x="4" y="0" width="24" height="4" fill="#e89030" /><rect x="7" y="6" width="18" height="7" fill="#eef6ff" stroke="#6890b8" /><path d="M7 17H25M7 21H25M7 25H25" stroke="#fff" strokeWidth="3" strokeDasharray="3 2" /><rect x="22" y="24" width="3" height="4" fill="#e89030" /></g> },
  { name: "Messenger", art: <g><rect x="1" y="1" width="29" height="29" rx="6" fill="#1890f8" /><path d="M8 6Q20 9 24 15Q25 17 20 20L23 20L15 28L17 22Q12 20 11 17L15 17Q9 14 9 11L13 12Q8 9 8 6Z" fill="#fff" /></g> },
];

function Taskbar() {
  return (
    <footer className={`flex h-[39px] shrink-0 items-stretch border-t border-[#7a8ea4] bg-linear-to-b from-[#2b405c] via-[#0d2547] to-[#123058] text-white ${sans}`}>
      <button aria-label="Start" className="flex w-[60px] items-center pl-2">
        <svg width="38" height="38" viewBox="0 0 38 38">
          <defs>
            <radialGradient id="orb" cx="50%" cy="85%" r="80%">
              <stop offset="0" stopColor="#50d8f8" />
              <stop offset=".6" stopColor="#1c5c94" />
              <stop offset="1" stopColor="#88a8c0" />
            </radialGradient>
          </defs>
          <circle cx="19" cy="19" r="18" fill="url(#orb)" stroke="#0a2038" />
          <path d="M10 12Q14 9 18 12L17 19Q13 16 9 19Z" fill="#f06828" />
          <path d="M20 12Q24 15 29 12L27 19Q23 22 18 19Z" fill="#98d048" />
          <path d="M9 20Q13 17 17 20L16 27Q12 24 8 27Z" fill="#48a8f0" />
          <path d="M18 20Q22 23 27 20L26 27Q21 30 17 27Z" fill="#f8d038" />
        </svg>
      </button>
      <div className="flex gap-1">
        {taskIcons.map((t) => (
          <button
            key={t.name}
            aria-label={t.name}
            className={`flex items-center justify-center rounded-sm border ${t.stacked ? "mr-[6px] w-[52px]" : "w-[58px]"} ${
              t.name === "X"
                ? "border-[#e8c8f0] bg-linear-to-br from-[#e8d0f0] to-[#a060b0] shadow-[3px_0_0_#9a60a8,6px_0_0_#6a4080]"
                : `border-[#8494a8] bg-linear-to-b from-[#5c6c82] via-[#2c405c] to-[#24446c] ${t.stacked ? "shadow-[2px_0_0_#1c3454,3px_0_0_#8494a8,5px_0_0_#1c3454,6px_0_0_#8494a8]" : ""}`
            }`}
          >
            <svg width="32" height="32" viewBox="0 0 32 32">{t.art}</svg>
          </button>
        ))}
      </div>
      <div className="ml-auto flex items-center">
        <svg width="154" height="26" viewBox="0 0 154 26">
          <g fill="none" stroke="#d0d0d0"><path d="M9 8Q10 4 13 6T16 3" /><rect x="1.500" y="9.500" width="14" height="8" fill="#999" /><path d="M3 12H14M3 15H14" strokeDasharray="1 1" stroke="#fff" /></g>
          <circle cx="31" cy="11" r="7" fill="#1428b8" stroke="#c0c8e8" />
          <path d="M28.500 9Q29 6.500 31.500 7Q34 8 31.500 11V12.500M31.500 14V16" stroke="#fff" strokeWidth="1.800" fill="none" />
          <path d="M49.500 4.500H54.500V8.500H49.500ZM51.500 4.500V2.500H56.500V6.500H54.500" stroke="#fff" fill="none" />
          <path d="M50 16H56L53 19ZM68 17H75L71.500 13Z" fill="#fff" />
          <path d="M89.500 8V21" stroke="#fff" /><path d="M91 9Q95 7 97 10Q100 11 102 9V15Q98 18 91 15Z" fill="#fff" />
          <circle cx="99" cy="17" r="4.500" fill="#d02020" /><path d="M97 15L101 19M101 15L97 19" stroke="#fff" strokeWidth="1.500" />
          <path d="M113 12H116L121 8V21L116 17H113Z" fill="#fff" /><path d="M123 12Q124.500 14.500 123 17M125 10Q127.500 14.500 125 19" stroke="#ccc" fill="none" />
          <path d="M141 10H151V18H141M144 21H151M147 18V21M137 9V13H141V9M138 7V9M140 7V9M139 13V21H144" stroke="#fff" fill="none" />
        </svg>
        <div className="w-[82px] text-center text-xs leading-[18px]">
          <div>11:22</div>
          <div>2022/10/26</div>
        </div>
        <button aria-label="Show desktop" className="mr-px h-full w-[13px] border border-[#7a8ea4] bg-linear-to-b from-[#8898ac] to-[#1c3454]" />
      </div>
    </footer>
  );
}

function TitleBar() {
  return (
    <div className={`flex h-[30px] shrink-0 items-center gap-[6px] bg-[linear-gradient(to_right,#c3cee0_0,#b4c2da_18%,#7f9cc8_23%,#1d3c68_27%,#1c4a78_40%,#16507c_52%,#0c2c5e_75%,#14407c_86%,#8fb0d8_100%)] text-[13px] ${sans}`}>
      <AppIcon />
      <h1 className="text-[#111]">Graphic Editor 9.07b2 (00@HY-HYCAM-PC411 - Windows, pid:484)</h1>
      <div className="mb-auto ml-auto flex h-5 overflow-hidden rounded-b border border-t-0 border-[#d8e0ec]">
        <button aria-label="Minimize" className="flex w-7 items-center justify-center border-r border-[#d8e0ec] bg-linear-to-b from-[#8ca0b8] to-[#586c88]">
          <svg width="12" height="12"><rect y="6" width="12" height="4" fill="#fff" stroke="#555" /></svg>
        </button>
        <button aria-label="Maximize" className="flex w-7 items-center justify-center border-r border-[#d8e0ec] bg-linear-to-b from-[#8ca0b8] to-[#586c88]">
          <svg width="12" height="11"><rect x="2" y="2" width="8" height="7" fill="none" stroke="#fff" strokeWidth="3" /></svg>
        </button>
        <button aria-label="Close" className="flex w-12 items-center justify-center bg-linear-to-b from-[#e09080] to-[#b83020]">
          <svg width="12" height="10" viewBox="0 0 12 10"><path d="M2 1L10 9M10 1L2 9" stroke="#fff" strokeWidth="3" /></svg>
        </button>
      </div>
    </div>
  );
}

export default function App() {
  return (
    <div className="relative flex h-screen flex-col overflow-hidden bg-black text-black">
      <div className="flex min-h-0 w-[calc(100%+18px)] flex-1 flex-col border-r-8 border-l-[9px] border-x-[#94a9d4]">
        <TitleBar />
        <Header />
        <div className="flex min-h-0 flex-1">
          <Sidebar />
          <main className="relative min-w-0 flex-1 overflow-hidden bg-black">
            <Board />
          </main>
          <ToolPanel />
        </div>
        <PromptBar />
        <div className="h-[33px] shrink-0 border-t-2 border-b-4 border-t-[#5a8888] border-b-[#d8ffff] bg-[#b4ffff] p-[2px]">
          <div className="h-6 border-t-2 border-b-2 border-t-[#dcffff] border-b-[#5a9898]" />
        </div>
      </div>
      <Taskbar />
      <HistogramPopup
        layer="drl"
        total={414}
        rows={drlRows}
        layerClass="bg-[#ff0000]"
        frameClass="top-[240px] left-[200px] bg-[linear-gradient(to_right,transparent_48%,#141616_52%),linear-gradient(to_bottom,#2b2d2d_30%,#cdd8d3_33%)]"
        selectable
      />
      <HistogramPopup
        layer="szdrl"
        total={3806}
        rows={[["r250", 3806]]}
        layerClass="bg-[#9bdbdb]"
        frameClass="top-[246px] left-[542px] bg-[radial-gradient(circle_at_61px_18px,#d03040_0,transparent_14px),radial-gradient(circle_at_321px_17px,#e02030_0,transparent_14px),linear-gradient(to_bottom,#3a3c40,#1c1a20_30%,#26242c)]"
      />
    </div>
  );
}
